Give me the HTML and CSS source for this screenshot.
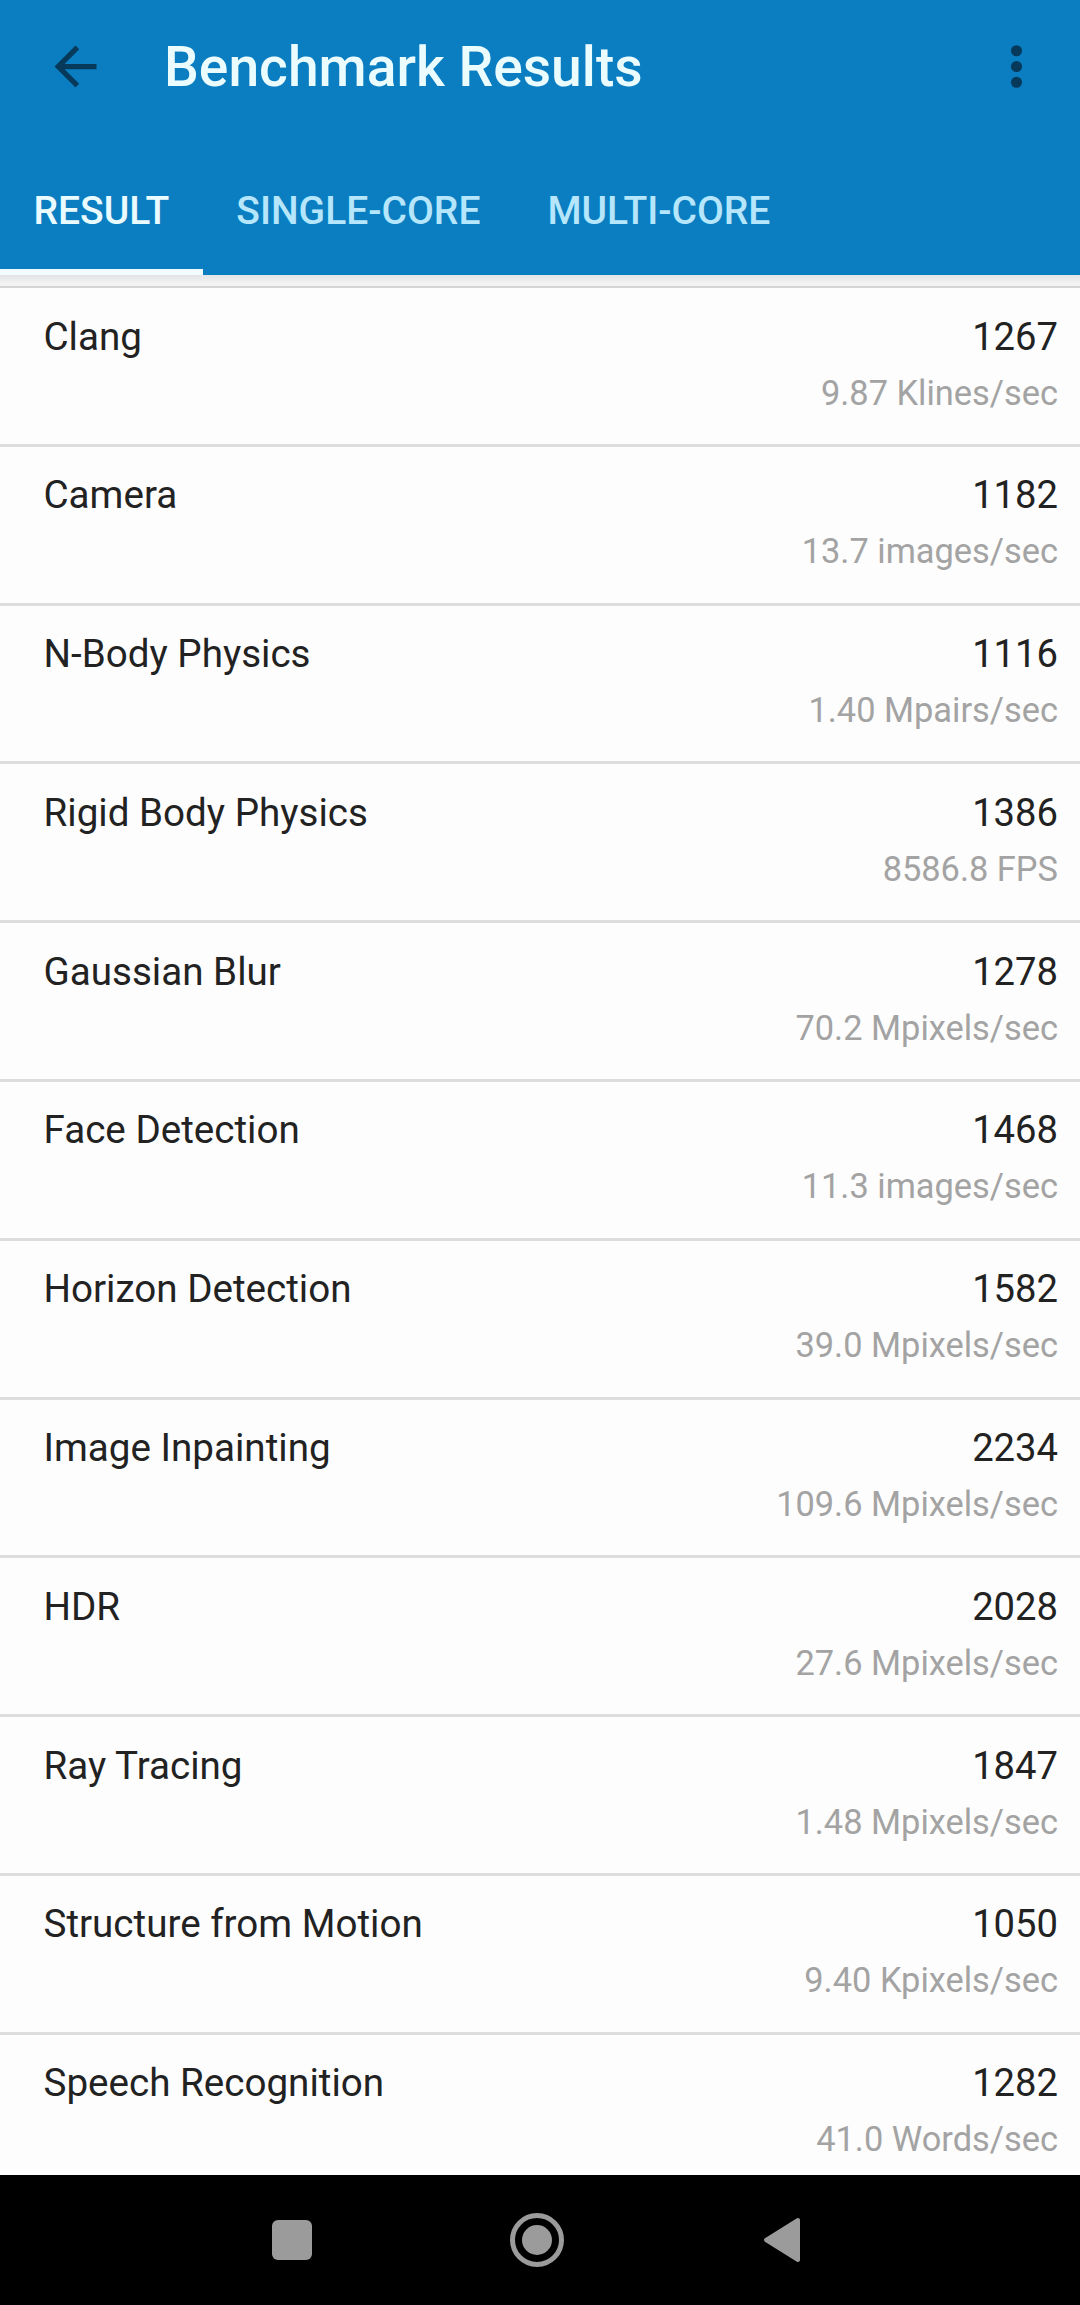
FILE: index.html
```html
<!DOCTYPE html>
<html lang="en">
<head>
<meta charset="utf-8">
<title>Benchmark Results</title>
<link rel="stylesheet" href="styles.css">
</head>
<body>
<div class="app">
  <header class="appbar">
    <div class="toolbar">
      <svg class="icon back" viewBox="0 0 24 24" aria-hidden="true"><path d="M20 11H7.83l5.59-5.59L12 4l-8 8 8 8 1.41-1.41L7.83 13H20v-2z"/></svg>
      <h1 class="title">Benchmark Results</h1>
      <svg class="icon more" viewBox="0 0 24 24" aria-hidden="true"><circle cx="12" cy="6" r="2.1"/><circle cx="12" cy="12" r="2.1"/><circle cx="12" cy="18" r="2.1"/></svg>
    </div>
    <nav class="tabs">
      <div class="tab active">RESULT</div>
      <div class="tab">SINGLE-CORE</div>
      <div class="tab">MULTI-CORE</div>
    </nav>
  </header>
  <div class="shadow"></div>
  <main class="list">
    <div class="row"><div class="name">Clang</div><div class="vals"><div class="score">1267</div><div class="rate">9.87 Klines/sec</div></div></div>
    <div class="row"><div class="name">Camera</div><div class="vals"><div class="score">1182</div><div class="rate">13.7 images/sec</div></div></div>
    <div class="row"><div class="name">N-Body Physics</div><div class="vals"><div class="score">1116</div><div class="rate">1.40 Mpairs/sec</div></div></div>
    <div class="row"><div class="name">Rigid Body Physics</div><div class="vals"><div class="score">1386</div><div class="rate">8586.8 FPS</div></div></div>
    <div class="row"><div class="name">Gaussian Blur</div><div class="vals"><div class="score">1278</div><div class="rate">70.2 Mpixels/sec</div></div></div>
    <div class="row"><div class="name">Face Detection</div><div class="vals"><div class="score">1468</div><div class="rate">11.3 images/sec</div></div></div>
    <div class="row"><div class="name">Horizon Detection</div><div class="vals"><div class="score">1582</div><div class="rate">39.0 Mpixels/sec</div></div></div>
    <div class="row"><div class="name">Image Inpainting</div><div class="vals"><div class="score">2234</div><div class="rate">109.6 Mpixels/sec</div></div></div>
    <div class="row"><div class="name">HDR</div><div class="vals"><div class="score">2028</div><div class="rate">27.6 Mpixels/sec</div></div></div>
    <div class="row"><div class="name">Ray Tracing</div><div class="vals"><div class="score">1847</div><div class="rate">1.48 Mpixels/sec</div></div></div>
    <div class="row"><div class="name">Structure from Motion</div><div class="vals"><div class="score">1050</div><div class="rate">9.40 Kpixels/sec</div></div></div>
    <div class="row"><div class="name">Speech Recognition</div><div class="vals"><div class="score">1282</div><div class="rate">41.0 Words/sec</div></div></div>
  </main>
  <footer class="navbar">
    <div class="nav-square"></div>
    <svg class="nav-home" viewBox="0 0 54 54" aria-hidden="true"><circle cx="27" cy="27" r="24.5" fill="none" stroke="#9b9b9b" stroke-width="5"/><circle cx="27" cy="27" r="15" fill="#9b9b9b"/></svg>
    <svg class="nav-back" viewBox="0 0 40 48" aria-hidden="true"><path d="M36 4 L4 24 L36 44 Z" fill="#9b9b9b" stroke="#9b9b9b" stroke-width="4" stroke-linejoin="round"/></svg>
  </footer>
</div>
</body>
</html>
```
FILE: styles.css
```css
* { box-sizing: border-box; }
html, body { margin: 0; padding: 0; }
body {
  font-family: Roboto, "Noto Sans", "Liberation Sans", sans-serif;
  background: #000;
}
.app {
  width: 1080px;
  height: 2305px;
  display: flex;
  flex-direction: column;
  overflow: hidden;
  background: #fdfdfd;
}
.appbar {
  background: #0a7ec1;
  flex: 0 0 auto;
}
.toolbar {
  height: 132px;
  display: flex;
  align-items: center;
  padding-left: 44px;
  padding-right: 56px;
}
.icon {
  width: 63px;
  height: 63px;
  fill: #06395a;
  flex: 0 0 auto;
}
.title {
  margin: 0 0 0 57px;
  flex: 1 1 auto;
  font-size: 55.2px;
  line-height: 63px;
  font-weight: 500;
  color: #ebfcff;
  position: relative;
  top: 1px;
}
.more { margin-right: -24px; }
.tabs {
  height: 143px;
  display: flex;
  align-items: flex-end;
}
.tab {
  padding: 0 33.5px;
  height: 86px;
  font-size: 39px;
  line-height: 44px;
  font-weight: 500;
  color: #b5e6fb;
  border-bottom: 6px solid transparent;
}
.tab.active {
  color: #eafbff;
  border-bottom-color: #f2fbff;
}
.shadow {
  height: 13px;
  flex: 0 0 auto;
  background: linear-gradient(#e2e4e6, #f3f3f3 80%);
  border-bottom: 2px solid #d4d4d4;
}
.list {
  flex: 1 1 auto;
  overflow: hidden;
  background: #fdfdfd;
}
.row {
  height: 158.8px;
  display: flex;
  justify-content: space-between;
  padding: 26.5px 22px 0 43.5px;
  border-bottom: 3px solid #dddddd;
}
.name {
  font-size: 38.6px;
  line-height: 44px;
  color: #222222;
}
.score {
  font-size: 38.2px;
  line-height: 44px;
  color: #222222;
}
.vals { text-align: right; }
.rate {
  margin-top: 14px;
  font-size: 34.4px;
  line-height: 40px;
  color: #a3a3a3;
}
.navbar {
  height: 130px;
  flex: 0 0 auto;
  background: #000;
  display: flex;
  align-items: center;
  padding-left: 272px;
  gap: 198px;
}
.nav-square {
  width: 40px;
  height: 40px;
  border-radius: 6px;
  background: #9b9b9b;
}
.nav-home {
  width: 54px;
  height: 54px;
}
.nav-back {
  width: 40px;
  height: 48px;
}
```
